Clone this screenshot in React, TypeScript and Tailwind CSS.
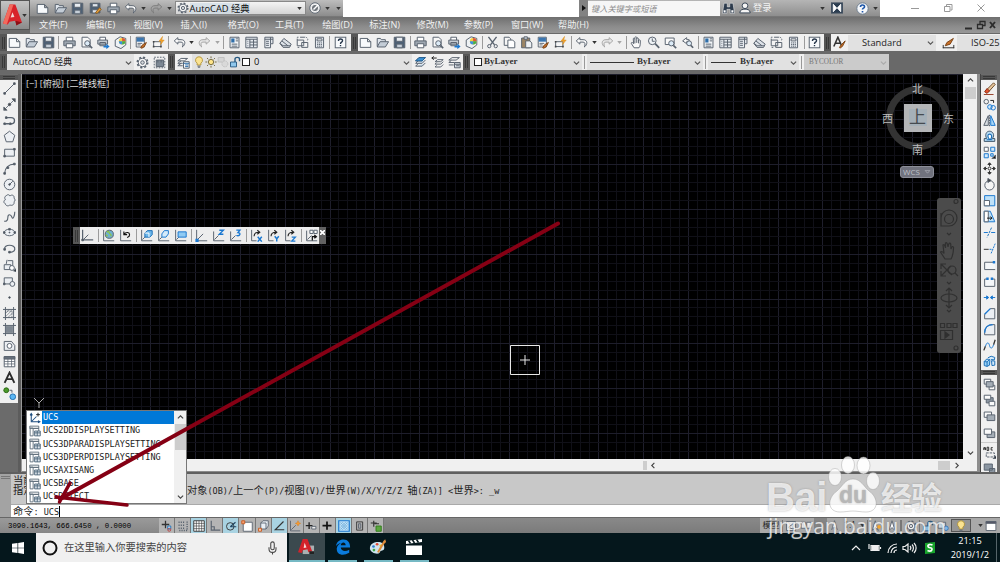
import React from 'react';

const ICONS: Record<string, React.ReactNode> = {
    new: <path d="M1.5 3h9l4 4v7h-13z M10.5 3v4h4" fill="#f7f9fb" />,
    open: <><path d="M1.5 13V3h4l1 1.5h5V7" fill="#dfe5ec" /><path d="M1.5 13.5 5 7h10.5l-4 6.500z" fill="#c3ccd6" /></>,
    save: <><path d="M1.500 1.500h13v13h-13z" fill="#4d6075" /><path d="M4 1.500h8v5H4z" fill="#e8edf2" /><path d="M4.500 10h7v4.500h-7z" fill="#c5ced8" /></>,
    saveas: <><path d="M1.500 1.500h12v12h-12z" fill="#4d6075" /><path d="M4 2h7v4H4zM4 9.500h7v4H4z" fill="#dfe5ec" /><path d="m8 13 5-6 2 2-5 5z" fill="#e9a13b" stroke="#8a5a1c" /></>,
    print: <><path d="M4 6V1.500h8V6" fill="#fff" /><path d="M1 6h14v6H1z" fill="#9ea7b1" /><path d="M4 9.500h8v5H4z" fill="#fff" /></>,
    preview: <><path d="M2.500 1.500h7l3 3v9h-10z" fill="#f7f7f7" /><circle cx="9" cy="9" r="3.200" fill="#dcebf7" /><path d="m11.500 11.500 3.500 3.500" strokeWidth="2" /></>,
    publish: <><path d="M3.500 5V1.500h7V5" fill="#fff" /><path d="M1 5h12v5H1zM3.500 8h7v4h-7z" fill="#c5ccd3" /><path d="M8 12h3.500V9.500L15.500 13l-4 3.200V14H8z" fill="#1b78d0" stroke="none" /></>,
    dwf: <><path d="m1.500 5 6-4 7 2v8l-6 4.500-7-3z" fill="#eef2f5" /><circle cx="10" cy="6.500" r="4" fill="#f4d03c" stroke="none" /><path d="M10 6.500V2.500a4 4 0 0 1 4 4z" fill="#e2543b" stroke="none" /><path d="M10 6.500h4a4 4 0 0 1-4 4z" fill="#45b04b" stroke="none" /><path d="M10 6.500v4a4 4 0 0 1-4-4z" fill="#3d8fe0" stroke="none" /></>,
    match: <><path d="M1.500 1.500h10v12h-10z" fill="#fff" /><path d="M2 2h9v5H2z" fill="#3b76b0" stroke="none" /><path d="M3 9h6M3 11h4" /><path d="m7 14.500 2-3.500 5-3-2.500 5-3 2z" fill="#c8702a" stroke="#7b4416" /></>,
    block: <><path d="M2 7h9v6H2z" fill="#f5f5f5" /><path d="M1 6h2v2H1zM1 12h2v2H1zM10 12h2v2h-2z" fill="#444" stroke="none" /><path d="m13 .5-4.500 6h3l-1 4 4.500-5.500h-3z" fill="#f1a32c" stroke="#d98a17" strokeWidth=".6" /></>,
    undo: <path d="M6 2 1.500 6 6 10V7.500h4c2.500 0 3 3 1.500 6 4.500-3 4-9-1.500-9H6z" fill="#fafafa" />,
    redo: <path d="m10 2 4.500 4L10 10V7.500H6c-2.500 0-3 3-1.500 6-4.500-3-4-9 1.500-9h4z" fill="#e6e6e6" stroke="#a5a5a5" />,
    redotop: <path d="m10 2 4.500 4L10 10V7.500H6c-2.500 0-3 3-1.500 6-4.500-3-4-9 1.500-9h4z" fill="#a4a4a4" stroke="#7c7c7c" />,
    props: <><path d="M2.500 1.500h11v13h-11z" fill="#f3f6f9" /><path d="M4 3h4v5H4z" fill="#2f6ea8" stroke="none" /><path d="M9.500 3.500h3M9.500 6h3M4.500 10h7M4.500 12.500h7" /></>,
    design: <><path d="M1 1.500h14v13H1z" fill="#e7ebf0" /><path d="M1 4h14M6 4v10M6 7.500h9M6 11h9M10.500 4v10M3 6.500h1M3 9h1M3 12h1" /></>,
    palette: <><path d="M3.500 1.500h10v8h-3v5h-7z" fill="#e7ebf0" /><path d="M10.500 1.500v8M3.500 4h10M5 6.500h3.500M5 9h3.500M5 11.500h3.500" /></>,
    sheet: <><path d="m1 9 5-6 9 7-2 4H5z" fill="#dce1e7" /><path d="m1 9 4 3h9M3.500 6 11 12" /></>,
    markup: <><path d="M5 1.500h6M1.500 5h8v7h-8zM7 8h7.500v6H7z" fill="#f4f4f4" /><path d="M3 1.500H1.500V5M12 1.500c3 1 3 3 1.500 5M2 14h3" strokeDasharray="2 1.200" /></>,
    calc: <><path d="M3 1.500h10v13H3z" fill="#e7ebf0" /><path d="M5 3.500h6v2.500H5z" fill="#fff" /><path d="M5 8.500h6M5 10.500h6M5 12.500h6" strokeDasharray="1.500 .8" /></>,
    help: <><rect x="1.500" y="1.500" width="13" height="13" fill="#f7f9fb" /><path d="M5.500 6c0-3 5-3 5-.3 0 2-2.500 1.800-2.500 4M8 11v1.700" stroke="#26364a" strokeWidth="1.700" /></>,
    cut: <><path d="m3 1 7.500 10M13 1 5.500 11" strokeWidth="1.700" /><circle cx="4" cy="12.500" r="2" /><circle cx="12" cy="12.500" r="2" /></>,
    copy: <><path d="M1.500 1.500h6l2 2v8h-8z" fill="#f7f7f7" /><path d="M6 5h6l2.500 2.500v7H6z" fill="#fff" /></>,
    paste: <><path d="M2 2.500h10v12H2z" fill="#9b8464" /><path d="M5 1h4v3H5z" fill="#cfd5da" /><path d="M7 6h5l2.500 2.500v6H7z" fill="#eef1f4" /></>,
    pan: <path d="M5 14.500 1.500 9c0-1.500 1.500-1.500 3 .5L4 3.500c.5-1.500 1.500-1 2 1V2c.5-1.500 2-1.500 2.300 0v2c.5-2.500 2-2.200 2.200 0v2c1-2 2.300-1.500 2.200 0C12.500 10 13 12 11 14.500zM6 5v4M8.300 4v4.500M10.500 5v4" fill="#fafafa" />,
    zoom: <><circle cx="6.500" cy="6" r="4.700" fill="#eff3f6" /><path d="M6.500 3v3.500h3" /><path d="m10 9.500 5 5" strokeWidth="2.200" /></>,
    zoomwin: <><path d="M1.500 2.500h11v8h-11z" fill="#fafafa" /><circle cx="9" cy="9" r="3.200" fill="#dcebf7" /><path d="m11.500 11.500 3.500 3.500" strokeWidth="2" /></>,
    zoomprev: <><path d="M7 2 2 6l5 3.500V7h3V4.500H7z" fill="#fafafa" /><circle cx="10" cy="9" r="3" fill="#dcebf7" /><path d="m12 11.500 3 3" strokeWidth="2" /></>,
    gear: <><circle cx="8" cy="8" r="6.300" strokeWidth="2.200" strokeDasharray="2.500 2.450" /><circle cx="8" cy="8" r="5.200" fill="#f7f7f7" /><circle cx="8" cy="8" r="2.200" fill="#d5d9dd" /></>,
    wsave: <><path d="M1.500 1.500h13v13h-13z" strokeDasharray="2 1.500" /><path d="M4 5h9v8H4z" fill="#7d8894" /><path d="M6 5v3M10 5v3" /></>,
    layer: <><path d="m1 6 4-3h8l-4 3zM1 9l4-3M1 12l4-3M1 9h6M1 12h6" fill="#f7f7f7" /><path d="M8 7h7v8H8z" fill="#f7f9fb" /><path d="M8 9h7M10 11h4M10 13h4" stroke="#2f6ea8" /></>,
    bulb: <><path d="M8 1a4.600 4.600 0 0 0-2.500 8.500V12h5V9.500A4.600 4.600 0 0 0 8 1z" fill="#fbe391" stroke="#b39435" /><path d="M6 13.500h4M6.500 15h3" /></>,
    sun: <><circle cx="8" cy="8" r="3.500" fill="#ffe58a" stroke="#6e6336" /><path d="M8 .5V3M8 13v2.500M.5 8H3M13 8h2.500M2.700 2.700l1.700 1.700M11.600 11.600l1.700 1.700M13.300 2.700l-1.700 1.700M4.400 11.600l-1.700 1.700" stroke="#6e6336" /></>,
    freeze: <g stroke="#bdbdbd"><path d="M1.500 2h8v6h-8z" fill="#d5d5d5" /><circle cx="10.500" cy="10.500" r="4" fill="#d9d9d9" strokeDasharray="2 1.200" /></g>,
    lock: <><path d="M2 8h8v6.500H2z" fill="#8fc7ec" stroke="#24577f" /><path d="M8 8V4c0-3 6-3 6 0v3" stroke="#24577f" strokeWidth="1.800" /></>,
    layeron: <><path d="m2 6 4-4h8l-4 4zM2 9l3-3M2 9h8l4-4M2 12.500l3-3M2 12.500h8l4-4" fill="#cfe3f3" /><path d="m2 6 4-4h8l-4 4z" fill="#3b93d6" stroke="#245f92" /></>,
    layerprev: <><path d="m5 7 3-2.500h7L12 7zM5 10l2-2M5 10h7l3-3M5 13.500l2-2M5 13.500h7l3-3" fill="#f7f7f7" /><path d="M7 2.500H1M3.500.5 1 2.500l2.500 2" stroke="#222" /></>,
    layerstate: <><path d="m1 5 4-3h9l-4 3zM1 8l3-2.500M1 8h7M1 11h6" fill="#f7f7f7" /><path d="M8 8h7v6.500H8zM8 10.200h7M10 12h4" fill="#d5dce3" /></>,
    textstyle: <><path d="M1 13 6 1.500 11 13M3 9h6" stroke="#333" strokeWidth="1.900" /><path d="m8 14 2-3 5-5-3 6-3 3z" fill="#c8702a" stroke="#7b4416" /></>,
    dimstyle: <><path d="M1 14.500h14M1.500 11v4M14.500 11v4" stroke="#333" /><path d="m4 12 2-4 8-5-4 7z" fill="#c8702a" stroke="#7b4416" /></>,
    line: <><path d="M2 14 14 2" /><path d="M1 13h2v2H1zM13 1h2v2h-2z" fill="#444" /></>,
    xline: <><path d="M1 15 15 1M1 15v-4l4 4zM15 1v4l-4-4z" fill="#444" strokeWidth="1" /><circle cx="8" cy="8" r="1.500" fill="#444" /></>,
    pline: <><path d="M4 4.500h6c5.500 0 5.500 7.500 0 7.500H2" strokeWidth="1.700" /><path d="M1 11h2v2H1zM3 3.500h2v2H3zM8 11h2v2H8z" fill="#444" /></>,
    polygon: <path d="m8 1.500 6.500 5-2.500 8H4l-2.500-8z" fill="#eceff3" />,
    rect: <><path d="M2 4h12v8.500H2z" fill="#eceff3" /><path d="M1 11.500h2v2H1zM13 3h2v2h-2z" fill="#444" /></>,
    arc: <><path d="M2 14C2.500 7 7 2.500 14 2.500" strokeWidth="1.500" /><path d="M1 13h2v2H1zM5 6h2v2H5zM13 1.500h2v2h-2z" fill="#444" /></>,
    circle: <><circle cx="8" cy="8" r="6.500" fill="#eceff3" /><path d="m8 8 4-4" /><circle cx="8" cy="8" r="1" fill="#444" /></>,
    revcloud: <path d="M4 2c2-2 4-1 4.500.5C11 0 14.500 2 13.500 5c2 1.500 1.500 4 0 4.500 1 3-2 5.500-5 4-2 2-5.500 1-5.500-1.500C0 11 1 7.500 3 7 1.500 5 2 3 4 2z" fill="#eceff3" />,
    spline: <path d="M1.500 13.500c2 1 4.500 0 4.500-4.500s3.500-4 5 0S14.500 6 14.500 2" strokeWidth="1.400" />,
    ellipse: <><ellipse cx="8" cy="8" rx="6.500" ry="4" fill="#eceff3" /><path d="M.5 7h2v2h-2zM7 3h2v2H7zM13.500 7h2v2h-2zM7.500 7.500h1v1h-1z" fill="#444" /></>,
    earc: <><path d="M2 8.500C1.500 5.500 4.500 4 8 4s7 2 6.500 5-4 4-7 3.500" strokeWidth="1.500" /><path d="M1 8h2v2H1zM7 11.500h2v2H7z" fill="#444" /></>,
    insert: <><path d="M1.500 7h8v6h-8zM6 2h6v6" fill="#eceff3" /><circle cx="11" cy="11" r="3" fill="#fff" /><path d="M13 14.500 16 12v3.500z" fill="#111" /><path d="m5 1-1 5" /></>,
    mkblock: <><path d="M1.500 3.500h10V11h-10z" fill="#eceff3" /><circle cx="11.500" cy="11" r="3" fill="#eceff3" /><path d="M.5 10h2v2h-2z" fill="#444" /></>,
    point: <circle cx="8" cy="8" r="1" fill="#333" />,
    hatch: <><path d="M3 0v16M0 3h16M13 0v16M0 13h16" /><path d="m3 8 5-5M3 12l9-9M6 13l7-7" strokeWidth=".7" /><path d="M3 5h8v8H3z" strokeDasharray="1 1" /></>,
    gradient: <><path d="M3 0v16M0 3h16M13 0v16M0 13h16" /><path d="M3 4h9v8H3z" fill="#7e8791" strokeWidth=".5" /></>,
    region: <><path d="M1.500 14V3h9l4 5v6z" fill="#eceff3" /><circle cx="8" cy="8.500" r="3" fill="#fff" /></>,
    table: <><path d="M1.500 2h13v12.500h-13z" fill="#fff" /><path d="M1.500 2h13v3h-13z" fill="#68727e" /><path d="M1.500 8h13M1.500 11h13M6 5v9.500M10.500 5v9.500" strokeWidth=".9" /></>,
    mtext: <path d="M2 14.500 8 2l6 12.500M4.500 10h7" stroke="#2d2d2d" strokeWidth="2.300" />,
    addsel: <><circle cx="4" cy="4" r="3" fill="#4c9a2a" stroke="#2c6a14" /><circle cx="12" cy="12" r="3.500" fill="#5cb8f5" stroke="#2573b3" /><path d="M8 4h3v3" /></>,
    erase: <><path d="m4 10 9-9 2 2-8 9z" fill="#e8c79e" stroke="#6b4c2a" /><path d="m2 12 3-4 3 3-3 3z" fill="#e2532f" stroke="#8d2f17" /><path d="M1 15.500h12" stroke="#8d2f17" /></>,
    mcopy: <><circle cx="4" cy="4.500" r="2.800" /><g stroke="#1b78d0"><circle cx="8.500" cy="11" r="2.800" fill="#d4eafa" /><circle cx="12.500" cy="12" r="2.800" /></g><path d="M9 3h4v3" stroke="#222" /></>,
    mirror: <><path d="M6.500 2v12H1z" fill="#d9dee3" /><path d="M9.500 2v12H15z" fill="#a9d7f7" stroke="#1b78d0" /><path d="M8 1v14" strokeDasharray="2 1" /></>,
    offset: <g stroke="#1b6fb8"><path d="M1.500 14v-3.500h3C2 6 4 1.500 8 1.500s7 4.500 3.500 9h3V14z" fill="#b8dcf5" stroke="#3d5368" /><path d="M4.500 12h4C5 9 5.500 5 8 5s4 3 1 7h2.500" fill="#fff" strokeWidth="1.400" /></g>,
    array: <><path d="M1.500 1.500h5v5h-5z" fill="#fff" /><path d="M9.500 1.500h5v5h-5zM1.500 9.500h5v5h-5zM9.500 9.500h3v3h-3z" stroke="#1b78d0" fill="#d4eafa" /><path d="M11 15.500 15.500 11v4.500z" fill="#111" /></>,
    move: <><path d="M8 1v14M1 8h14" strokeDasharray="4 1" stroke="#333" /><path d="M6 3l2-2 2 2zM6 13l2 2 2-2zM3 6 1 8l2 2zM13 6l2 2-2 2z" fill="#333" stroke="#333" /><circle cx="8" cy="8" r="1.800" fill="#fff" stroke="#333" /></>,
    rotate: <><circle cx="8" cy="9" r="5.800" fill="#f5f5f5" /><path d="M6 .5 10 3 6 5.500z" fill="#444" /></>,
    scale: <><path d="M2 2h12.500v12.500H2z" fill="#bfe1f8" stroke="#1b78d0" /><path d="M1.500 8h6.500v6.500H1.500z" fill="#fff" /></>,
    stretch: <><path d="M1.500 1.500H9l5.500 13h-13z" fill="#bfe1f8" stroke="#1b78d0" /><path d="M1.500 1.500h5v13h-5z" fill="#fff" /><path d="M5 10h6M9 8l2 2-2 2" stroke="#111" /></>,
    trim: <><path d="M1 8h5M10 8h5" stroke="#1b78d0" /><path d="M10.500 2 5 14" stroke="#1b6fb8" strokeDasharray="3 1.200" /></>,
    extend: <><path d="M1 9h6" stroke="#333" /><path d="M8 9h4M10 14l5-12" stroke="#1b78d0" strokeDasharray="2.500 1" /></>,
    breakpt: <><path d="M14 4H2v9h13" fill="#f5f7f9" /><path d="M12 2.500h3v3h-3z" fill="#1b78d0" stroke="none" /></>,
    break: <><path d="M5 5H2v9h12.500V5H11" fill="#f5f7f9" /><path d="M4 3h3v3H4zM9.500 3h3v3h-3z" fill="#1b78d0" stroke="none" /></>,
    join: <path d="M1 8h5M10 8h5M4.500 6 7 8l-2.500 2zM11.500 6 9 8l2.500 2z" stroke="#1b78d0" fill="#1b78d0" />,
    chamfer: <><path d="M2 14.500V9l7-7h5.500v12.500z" fill="#eceff3" /><path d="m2 9 7-7" stroke="#1b78d0" strokeWidth="1.700" /></>,
    fillet: <><path d="M2 14.500V12C2 6 6 2 12 2h2.500v12.500z" fill="#eceff3" /><path d="M2 12C2 6 6 2 12 2" stroke="#1b78d0" strokeWidth="1.700" /></>,
    blend: <><path d="M1 14 3 9M13 7l2-6" stroke="#333" strokeWidth="1.600" /><path d="M3 9c2-6 4-5 5-1s3 5 5-1" stroke="#1b78d0" /></>,
    explode: <><path d="m1.500 8 3-3 4 .5-.5 7-3 1.500-3.500-1z" fill="#9bd1f5" stroke="#1b6fb8" /><path d="m6 3.500 4-2 4.500 1.500-.5 3-4-.5M10.500 7l4 .5v5l-3.500.5zM1.500 8l3.500.5 3-3M5 8.500V14" fill="#d4eafa" stroke="#1b6fb8" /></>,
    front: <><path d="M1.500 1.500h8v6h-8zM7.500 9h7v5.500h-7z" fill="#fafafa" /><path d="M4 4.500h8.500V11H4z" fill="#a4adb6" /></>,
    back: <><path d="M4 4.500h8.500V11H4z" fill="#8b96a2" /><path d="M1.500 1.500h8v5h-8zM7.500 9h7v5.500h-7z" fill="#fafafa" /></>,
    above: <><path d="M1.500 2.500h9V9h-9z" fill="#fafafa" /><path d="M5 6h9.500v7H5z" fill="#a4adb6" /></>,
    under: <><path d="M5 6h9.500v7H5z" fill="#a4adb6" /><path d="M1.500 2.500h9V9h-9z" fill="#fafafa" /></>,
    annofront: <><path d="M1 5V2h2v3M1 3.500h2M5 1.500v4h2v-4zM12 2h-2v3h2" stroke="#222" strokeWidth="1.100" /><path d="M4 8.500h10v5H4z" strokeDasharray="3 1.200" /><path d="M12.500 15.500 16 12v3.500z" fill="#111" /></>,
    hatchback: <path d="M1.500 2.500h10V10h-10zM8 8h6.500v7H8z" fill="#8b96a2" />,
    ucs: <><path d="M2 1v12.500h13" strokeWidth="1.500" /><path d="m3 13 6-6" /><path d="M1 12.500h2v2H1z" fill="#444" /></>,
    ucsworld: <><path d="M2 1v13.500h13" /><circle cx="9" cy="6.500" r="5" fill="#6fb1d0" /><path d="M6 4c2-2 3 0 3 1s3 1 2 4M5 7l2 2" stroke="#8bc34a" strokeWidth="1.800" /></>,
    ucsprev: <><path d="M2 1v13.500h13" /><path d="M6 6.500C9 3 13 4 13 7s-2 3-3 3.500M6 3v4h4" stroke="#111" strokeWidth="1.400" /></>,
    ucsface: <><path d="M2 1v13.500h13M3 13l3-3" /><path d="m6 5 3-3h6v5l-3 3H6z" fill="#6db7ea" stroke="#1b6fb8" /><path d="M6 5h5v5" stroke="#fff" /></>,
    ucsobj: <><path d="M2 1v13.500h13M3 13l3-3" /><path d="m6 6 3-4h5v4l-3 4H6z" fill="#d4eafa" stroke="#1b78d0" /></>,
    ucsview: <><path d="M2 1v13.500h13M3 13l3-3" /><path d="M5 3.500h10V10H5z" fill="#8fcaf3" stroke="#1b78d0" /></>,
    ucsorigin: <><path d="M2 1v13.500h13M3 13l7-7" /><path d="M.5 12h4v4h-4z" fill="#1b78d0" stroke="none" /></>,
    ucsz: <><path d="M2 3v11.500h13M3 13l5-5" /><path d="M9 1.500h5l-5 5h5" stroke="#1b78d0" strokeWidth="1.700" /></>,
    ucs3: <><path d="M2 3v11.500h13M3 13l5-5" /><path d="M9 1.500h4.500L11 4.500c4 0 3 5-2 3.500" stroke="#1b78d0" strokeWidth="1.600" /></>,
    rotx: <><path d="M2 1v13.500h6" /><path d="M5 9c0-4 2-5 6-5M9 1.500 12 4 9 6.500" stroke="#222" strokeWidth="1.400" /><path d="m9.500 9.500 5 6m0-6-5 6" stroke="#1b78d0" strokeWidth="1.800" /></>,
    roty: <><path d="M2 1v13.500h6" /><path d="M5 9c0-4 2-5 6-5M9 1.500 12 4 9 6.500" stroke="#222" strokeWidth="1.400" /><path d="m9.500 9 2.500 3 2.500-3M12 12v3.500" stroke="#1b78d0" strokeWidth="1.800" /></>,
    rotz: <><path d="M2 1v13.500h6" /><path d="M5 9c0-4 2-5 6-5M9 1.500 12 4 9 6.500" stroke="#222" strokeWidth="1.400" /><path d="M9.500 10h4.500l-4.500 5H14" stroke="#1b78d0" strokeWidth="1.600" /></>,
    ucsapply: <><path d="M2 2v12.500h13M3 13l5-5" /><path d="M6 1.500h4v4H6zM11 1.500h4v4h-4z" fill="#fff" /><path d="M9 14V9.500h4M11.500 7.500l2.500 2-2.500 2" stroke="#111" strokeWidth="1.500" /></>,
    infer: <><path d="M6 1v10M1 6h10" strokeWidth="1.700" stroke="#333" /><path d="M9 8h4v4H9z" stroke="#1b6fb8" fill="#c1def2" /><circle cx="11" cy="13" r="2" stroke="#b44" /></>,
    snap: <path d="M2 3h9M2 7h9M2 11h9M13.500 2v12H2" strokeDasharray="1.500 1.500" strokeWidth="1.800" />,
    grid: <><path d="M1 1h14v14H1z" fill="#fff" stroke="#333" /><path d="M1 4.500h14M1 8h14M1 11.500h14M4.500 1v14M8 1v14M11.500 1v14" stroke="#333" strokeWidth=".8" /></>,
    ortho: <path d="M3 1v12.500h12M3 9h4v4" strokeWidth="1.500" />,
    polar: <><circle cx="7" cy="8.500" r="5" stroke="#333" /><path d="m7 9 7-6M7 9h8" stroke="#1f4460" strokeWidth="1.500" /></>,
    osnap: <><path d="M3 3h12v12H3z" fill="#fff" /><path d="M1 1h4v4H1z" fill="#f7a071" stroke="#c65b23" /></>,
    osnap3d: <><path d="m5 4 3-3h7v7l-3 4H5z" fill="#e8eef4" /><path d="M5 4h7v8" /><path d="M2 11h4v4H2z" stroke="#c65b23" fill="#f7c3a1" /></>,
    otrack: <path d="M14 2 3 13h12" stroke="#333" strokeWidth="1.500" />,
    ducs: <><path d="M2 1v13.500h13M3 13l6-6" /><path d="m12 1 1 2.500 2.500 1-2.500 1-1 2.500-1-2.500-2.500-1 2.500-1z" fill="#ff9c2f" stroke="#d47a12" strokeWidth=".6" /></>,
    dyn: <><path d="M5.500 3v9M1 7.500h9" stroke="#222" strokeWidth="1.800" /><path d="M9 8.500h5.500V12H9z" fill="#eee" /></>,
    lwt: <path d="M8 2v11M2 7.500h12" stroke="#111" strokeWidth="2.300" />,
    tpy: <><path d="M1 1h14v14H1z" fill="#c2e2f8" stroke="#1b78d0" strokeWidth="1.600" /><path d="m3 6 3-3M3 10l7-7M3 13 13 3M6 13l7-7M10 13l3-3M3 10l3 3M3 6l7 7M3 3l10 10M6 3l7 7M10 3l3 3" stroke="#4b95cc" strokeWidth=".6" /></>,
    qp: <><path d="M3.500 2.500h8v11h-8z" stroke="#333" /><path d="M6 5h3v6H6z" fill="#aaa" /></>,
    sc: <><path d="M5 1v8M1 4h8M6 5h6" stroke="#333" strokeWidth="1.500" /><path d="M8 8h7v7H8z" fill="#5aa63f" stroke="#2f7a18" /></>,
    layout: <path d="M2 2h12v12H2zM4 10l7-5v7z" fill="#eee" />,
    qview: <path d="M1.500 3h6v8h-6zM9 3h6v8H9z" fill="#eee" />,
    anno: <path d="m8 1 4 13-4-4-4 4z" fill="#fff" />,
    annoVis: <><path d="m7 1 4 13-4-4-4 4z" fill="#fff" /><circle cx="12" cy="9" r="2.500" fill="#f6a52b" stroke="none" /></>,
    monitor: <><path d="M1.500 3h10v8h-10z" fill="#c7d9e6" /><circle cx="12" cy="11" r="3" fill="#82b9ea" stroke="#3375b5" /></>,
    clean: <><path d="M1.500 2h13v12h-13z" fill="#fff" /><path d="M1.500 2h13v2.500h-13z" fill="#556" /></>,
    compass: <><circle cx="8" cy="8" r="7" fill="#eee" /><circle cx="8" cy="8" r="4.800" fill="#6d737a" stroke="#fff" /><path d="m6 10 6-6" stroke="#fff" strokeWidth="2" /></>,
    binoc: <><path d="M2.500 1.500h4V6h3V1.500h4L15.500 14H10V9H6v5H.5z" fill="#2e3c4d" stroke="#e9e9e9" strokeWidth=".7" /><path d="M2 10h2.500v3H2zM11.500 10H14v3h-2.500z" fill="#fff" stroke="none" /></>,
    person: <><circle cx="8" cy="5" r="3.800" fill="#f5f5f5" stroke="#2e3c4d" /><path d="M1 14.500c0-4 4-5 7-5s7 1 7 5z" fill="#f5f5f5" stroke="#2e3c4d" /></>,
    exchange: <><path d="M0 1h16v14H0z" fill="#2b3d50" /><path d="m3 3 4.500 5L3 13zM13 3 8.500 8l4.500 5z" fill="#fff" stroke="#fff" /></>,
    helpblue: <><circle cx="8" cy="8" r="7" fill="#f6f8fb" stroke="#6d7d90" /><path d="M5.500 6c0-3 5-3 5-.3 0 2-2.500 1.800-2.500 3.500M8 11v2" stroke="#1c55a8" strokeWidth="2" /></>,
    sysvar: <><path d="M1 1.500h12v3H1zM1.500 4v10.500h4V4zM6 4.500h7V8" fill="#fff" stroke="#5b6b78" /><path d="M7.500 8h7.500v6.500H7.500z" fill="#dfe6ec" stroke="#4b6478" /><path d="M7.500 10.500H15M11 8v6.500" stroke="#4b6478" /></>,
    ucscmd: <><path d="M3 3v10h11M4 12l6-6M1.500 4.500 3 2l1.500 2.500M12 11.500l2.500 1.500-2.500 1.500" stroke="#1e4e80" strokeWidth="1.400" /><path d="M12 1v5M9.500 3.500h5" stroke="#222" strokeWidth="1.300" /></>,
};

const Icon = ({ name, size = 14 }: { name: string; size?: number }) => (
    <svg
        viewBox="0 0 16 16"
        width={size}
        height={size}
        fill="none"
        stroke="#59636f"
        strokeWidth={1.2}
        className="block shrink-0"
    >
        {ICONS[name]}
    </svg>
);

const Caret = ({ dim = false }: { dim?: boolean }) => (
    <svg viewBox="0 0 6 4" width="5" height="3" className="shrink-0">
        <path d="M0 0h6L3 4z" fill={dim ? '#a5a5a5' : '#333'} />
    </svg>
);

type Dir = 'down' | 'up' | 'left' | 'right';

const CHEVRONS: Record<Dir, string> = {
    down: 'M1 3l3 3 3-3',
    up: 'M1 5l3-3 3 3',
    left: 'M5 1L2 4l3 3',
    right: 'M3 1l3 3-3 3',
};

const Chevron = ({ dir = 'down', color = '#444' }: { dir?: Dir; color?: string }) => (
    <svg viewBox="0 0 8 8" width="7" height="7" className="shrink-0">
        <path d={CHEVRONS[dir]} fill="none" stroke={color} strokeWidth="1.3" />
    </svg>
);

const Grip = () => (
    <div className="flex h-full w-[7px] shrink-0 items-center justify-center gap-px bg-[#565656]">
        <div className="h-3 w-px bg-[#383838]" />
        <div className="h-3 w-px bg-[#383838]" />
    </div>
);

// "|" is a separator, "v" / "w" are drop-down carets (normal / disabled)
const Tools = ({ items }: { items: string }) => (
    <>
        {items.split(' ').map((item, i) => {
            if (item === '|') {
                return <div key={i} className="mx-[1.5px] h-[13px] w-px shrink-0 bg-[#9b9b9b]" />;
            }
            if (item === 'v' || item === 'w') {
                return (
                    <div key={i} className="flex w-[8.5px] shrink-0 justify-center">
                        <Caret dim={item === 'w'} />
                    </div>
                );
            }
            return (
                <div key={i} className="flex w-[17px] shrink-0 justify-center">
                    <Icon name={item} size={13} />
                </div>
            );
        })}
    </>
);

const STANDARD_A = 'new open save | print preview publish dwf | match block | undo v redo w | props design palette sheet markup calc | help';
const STANDARD_B = 'new open save | print preview publish dwf | cut copy paste match block | undo v redo w | pan zoom zoomwin zoomprev | props design palette sheet markup calc | help';

const MENUS = ['文件(F)', '编辑(E)', '视图(V)', '插入(I)', '格式(O)', '工具(T)', '绘图(D)', '标注(N)', '修改(M)', '参数(P)', '窗口(W)', '帮助(H)'];

const QuickBar = () => (
    <div className="flex h-[17px] bg-white">
        <div className="flex w-[313px] items-center border-b border-[#777] bg-[linear-gradient(#bdbdbd,#8c8c8c)] pl-[4px]">
            {['new', 'open', 'save', 'saveas', 'print', 'undo'].map((name) => (
                <div key={name} className="flex w-[17.600px] justify-center">
                    <Icon name={name} size={13} />
                </div>
            ))}
            <div className="flex w-[8px] justify-center"><Caret /></div>
            <div className="flex w-[18px] justify-center"><Icon name="redotop" size={13} /></div>
            <div className="flex w-[7px] justify-center"><Caret /></div>
            <div className="ml-[2px] flex h-[14px] w-[131px] items-center border border-[#888] bg-[linear-gradient(#f4f4f4,#d4d4d4)] pr-[3px] pl-px text-[9.300px] text-[#111]">
                <Icon name="gear" size={12} />
                <span className="ml-px bg-[#cfdbe6]/70 leading-[11px]">AutoCAD 经典</span>
                <span className="flex-1" />
                <Caret />
            </div>
            <div className="ml-[3px]"><Icon name="compass" size={12} /></div>
            <div className="ml-[4px]"><Caret /></div>
            <div className="ml-[6px]"><Caret /></div>
        </div>
        <div className="flex-1" />
        <div className="flex w-[301px] items-center border-b border-[#777] bg-[linear-gradient(#b5b5b5,#8e8e8e)]">
            <div className="flex h-full w-[9px] items-center justify-center bg-[#828282]">
                <svg viewBox="0 0 4 6" width="4" height="6"><path d="M0 0l4 3-4 3z" fill="#111" /></svg>
            </div>
            <div className="h-[15px] w-[132px] bg-[#f6f6f6] pl-[3px] text-[8.200px] leading-[15px] text-[#8a8a8a] italic">键入关键字或短语</div>
            <div className="ml-[2px]"><Icon name="binoc" size={13} /></div>
            <div className="ml-[4px]"><Icon name="person" size={12} /></div>
            <span className="ml-[2px] w-[67px] text-[9.300px] text-[#f3f3f3]">登录</span>
            <Caret />
            <div className="ml-[6px]"><Icon name="exchange" size={12} /></div>
            <div className="ml-[13px]"><Icon name="helpblue" size={13} /></div>
            <div className="ml-[4px]"><Caret /></div>
        </div>
        <div className="flex w-[120px] items-center">
            <svg viewBox="0 0 120 17" width="120" height="17" fill="none" stroke="#999" strokeWidth="1">
                <path d="M31 8.500h8M64.500 6.500h5.500v5h-5.500zM66.500 6V4.500h5.500V10h-1.500M97.500 4.500l7 7M104.500 4.500l-7 7" />
            </svg>
        </div>
    </div>
);

const MenuBar = () => (
    <div className="flex h-[16px] items-center bg-[linear-gradient(#6f6f6f,#8c8c8c_60%,#979797)] text-[9.200px] text-[#f0f0f0]">
        <div className="flex pl-[2px]">
            {MENUS.map((m) => (
                <div key={m} className="w-[47.200px] pl-[7px] whitespace-nowrap">{m}</div>
            ))}
        </div>
        <div className="flex-1" />
        <svg viewBox="0 0 40 12" width="40" height="12" fill="none" stroke="#2b2b2b" className="mr-px">
            <path d="M6 9.500h7" strokeWidth="2" />
            <path d="M18.500 5.500h5v4h-5zM21 5V2.500h5v4h-2" strokeWidth="1.300" />
            <path d="m31 3 5 6M36 3l-5 6" strokeWidth="1.900" />
        </svg>
    </div>
);

const AppButton = () => (
    <div className="flex w-[30px] flex-col bg-[#696969]">
        <div className="flex h-[30px] items-center border border-[#555] bg-[linear-gradient(#c4c4c4,#8b8b8b)] pl-[2px]">
            <svg viewBox="0 0 20 24" width="19" height="24">
                <path d="M7 1h6l7 19-6 2-1-4-6 1-2 3-5-1z" fill="#d8232a" />
                <path d="M7 1h4L4 22l-4-1z" fill="#f26a5d" />
                <path d="m10 9 2 5-4 .5z" fill="#f4d9d6" />
                <path d="m13 18 7 2-6 3z" fill="#8d0f15" />
            </svg>
            <Caret />
        </div>
    </div>
);

const Combo = ({ className, children, disabled = false }: { className: string; children: React.ReactNode; disabled?: boolean }) => (
    <div className={`flex h-[16px] shrink-0 items-center pr-[2px] ${disabled ? 'bg-[#cbcbcb]' : 'bg-[#e1e1e1]'} ${className}`}>
        <div className="flex flex-1 items-center overflow-hidden whitespace-nowrap">{children}</div>
        <Chevron color={disabled ? '#aaa' : '#555'} />
    </div>
);

const ToolbarRows = () => (
    <div className="flex h-[41px] flex-col bg-[#696969]">
        <div className="mt-px flex h-[17px] items-center overflow-hidden bg-[#f0f0f0]">
            <Grip />
            <div className="-ml-[1.500px] flex w-[345.500px] shrink-0 items-center"><Tools items={STANDARD_A} /></div>
            <Grip />
            <div className="-ml-[1px] flex w-[467px] shrink-0 items-center"><Tools items={STANDARD_B} /></div>
            <Grip />
            <div className="flex w-[17px] shrink-0 justify-center"><Icon name="textstyle" size={13} /></div>
            <Combo className="w-[88px] pl-[14px] text-[9.300px] text-[#222]">Standard</Combo>
            <div className="mx-[2px] h-[13px] w-px bg-[#bbb]" />
            <div className="flex w-[17px] shrink-0 justify-center"><Icon name="dimstyle" size={13} /></div>
            <div className="flex h-[16px] w-[46px] shrink-0 items-center bg-[#e1e1e1] pl-[14px] text-[9.300px] whitespace-nowrap text-[#222]">ISO-25</div>
        </div>
        <div className="mt-[3px] flex h-[16px] w-[889px] items-center bg-[#f0f0f0]">
            <Grip />
            <Combo className="w-[127px] pl-[6px] text-[9.200px] text-[#222]">AutoCAD 经典</Combo>
            <Tools items="gear wsave" />
            <Grip />
            <Tools items="layer" />
            <Combo className="w-[220px] pl-px">
                <div className="flex items-center">
                    <Icon name="bulb" size={12} />
                    <Icon name="sun" size={12} />
                    <Icon name="freeze" size={12} />
                    <Icon name="lock" size={12} />
                    <div className="ml-px h-[8px] w-[8px] border border-[#222] bg-white" />
                    <span className="ml-[4px] text-[9.300px] leading-[14px] text-[#111]">0</span>
                </div>
            </Combo>
            <Tools items="layeron layerprev layerstate" />
            <Grip />
            <Combo className="w-[112px] pl-[4px] font-['Liberation_Serif'] text-[9px] font-bold text-[#333]">
                <div className="mr-[2px] h-[8px] w-[8px] border border-[#222] bg-white" />
                ByLayer
            </Combo>
            <div className="mx-[2px] h-[13px] w-px bg-[#999]" />
            <Combo className="w-[116px] pl-[3px] font-['Liberation_Serif'] text-[9px] font-bold text-[#333]">
                <div className="mr-[3px] h-px w-[44px] bg-[#333]" />
                ByLayer
            </Combo>
            <div className="mx-[2px] h-[13px] w-px bg-[#999]" />
            <Combo className="w-[91px] pl-[3px] font-['Liberation_Serif'] text-[9px] font-bold text-[#333]">
                <div className="mr-[4px] h-px w-[25px] bg-[#333]" />
                ByLayer
            </Combo>
            <div className="mx-[2px] h-[13px] w-px bg-[#999]" />
            <Combo disabled className="flex-1 pl-[5px] font-['Liberation_Serif'] text-[7.200px] text-[#777]">BYCOLOR</Combo>
        </div>
    </div>
);

const DRAW = ['line', 'xline', 'pline', 'polygon', 'rect', 'arc', 'circle', 'revcloud', 'spline', 'ellipse', 'earc', 'insert', 'mkblock', 'point', 'hatch', 'gradient', 'region', 'table', 'mtext', 'addsel'];
const MODIFY = ['erase', 'mcopy', 'mirror', 'offset', 'array', 'move', 'rotate', 'scale', 'stretch', 'trim', 'extend', 'breakpt', 'break', 'join', 'chamfer', 'fillet', 'blend', 'explode'];
const ORDER = ['front', 'back', 'above', 'under'];

const VTools = ({ items }: { items: string[] }) => (
    <>
        {items.map((name) => (
            <div key={name} className="flex h-[16.100px] shrink-0 items-center justify-center">
                <Icon name={name} size={13} />
            </div>
        ))}
    </>
);

const HGrip = () => (
    <div className="flex h-[5px] shrink-0 flex-col items-center justify-center gap-px bg-[#565656]">
        <div className="h-px w-3 bg-[#383838]" />
        <div className="h-px w-3 bg-[#383838]" />
    </div>
);

// grid spacing of the drawing area, a heavy line every fifth
const STEP = 8.96;
const gridLines = (start: number, limit: number) => {
    const out: { at: number; major: boolean }[] = [];
    for (let i = -5; start + i * STEP < limit; i++) {
        const at = start + i * STEP;
        if (at >= 0) out.push({ at: Math.round(at) + 0.5, major: i % 5 === 0 });
    }
    return out;
};

const Grid = () => (
    <svg width="941" height="385" className="block">
        {gridLines(38.7, 941).map((l) => (
            <path key={`x${l.at}`} d={`M${l.at} 0V385`} stroke={l.major ? '#1e1e2b' : '#101017'} />
        ))}
        {gridLines(45.3, 385).map((l) => (
            <path key={`y${l.at}`} d={`M0 ${l.at}H941`} stroke={l.major ? '#1e1e2b' : '#101017'} />
        ))}
        {/* pick box cursor */}
        <path d="M488.500 271.500h29v29h-29zM498 286h10M503 281v10" fill="none" stroke="#e8e8e8" />
        <path d="m12 324 5 5 5-5M17 329v5" fill="none" stroke="#aaa" />
    </svg>
);

const ViewCube = () => (
    <div className="absolute top-[5px] left-[859px] h-[82px] w-[74px] font-['Noto_Sans_CJK_SC'] text-[11px] leading-[12px] text-[#bdbdbd]">
        <svg viewBox="0 0 74 82" width="74" height="82" className="absolute inset-0">
            <circle cx="37" cy="39" r="28.500" fill="none" stroke="#333" strokeWidth="7" />
            <path d="M23 25h28v28H23z" fill="#b3b5b7" />
            <path d="M28 30h18v17H28z" fill="#a5b0b8" />
        </svg>
        <span className="absolute top-[3px] left-[31px]">北</span>
        <span className="absolute top-[33px] left-[1px]">西</span>
        <span className="absolute top-[33px] left-[62px]">东</span>
        <span className="absolute top-[64px] left-[31px]">南</span>
        <span className="absolute top-[28px] left-[28px] text-[17px] leading-[18px] text-[#454b50]">上</span>
    </div>
);

const NavBar = () => (
    <div className="absolute top-[124px] left-[915px] rounded-[3px] bg-[#4b4b4b]">
        <svg viewBox="0 0 24 155" width="24" height="155" fill="none" stroke="#303030" strokeWidth="1.2" className="block">
            <circle cx="19" cy="3.500" r="2" />
            <path d="M4 15v13h8a8 8 0 1 0-8-8" />
            <circle cx="12" cy="21" r="4.500" />
            <path d="m10 35 2 2 2-2M10 84l2 2 2-2M10 112l2 2 2-2" />
            <path d="M8 61 3.500 54c1-1 2.500 0 3.500 1.500L6 47c1-1 2 0 2.500 3V45c1-1 2 0 2.500 4 .5-4 2-5 2.700-3l.3 5c1-3 2-3 2.500-1.500 0 5-.5 8-2.500 11.500z" />
            <path d="m4 66 11 11M4 71v-5h5M4 78l10-10M4 73v5h5" />
            <circle cx="15" cy="72" r="4" />
            <path d="m18 75 3 3M12 90v20M9 93l3-3 3 3M9 107l3 3 3-3" />
            <ellipse cx="12" cy="100" rx="8" ry="4" />
            <path d="M3.500 125.500h4v4h-4zM10 125.500h4v4h-4zM16 125.500h4v4h-4zM3.500 132.500h12v9h-12z" />
            <path d="m8 134 4 3-4 3z" fill="#303030" />
            <circle cx="19" cy="150" r="2" />
        </svg>
    </div>
);

const UcsBar = () => (
    <div className="absolute top-[153px] left-[51px] flex h-[17px] w-[253px] items-center bg-[#ededed]">
        <Grip />
        <div className="-ml-px flex w-[240px] items-center">
            <Tools items="ucs | ucsworld ucsprev | ucsface ucsobj ucsview | ucsorigin ucsz ucs3 | rotx roty rotz | ucsapply" />
        </div>
        <div className="flex h-full flex-1 justify-center bg-[#616161] pt-[3px]">
            <svg viewBox="0 0 6 6" width="5" height="5"><path d="m0 0 6 6M6 0 0 6" stroke="#fff" strokeWidth="2" /></svg>
        </div>
    </div>
);

const Canvas = () => (
    <div className="relative h-[385px] w-[941px] overflow-hidden bg-black">
        <Grid />
        <div className="absolute top-[4px] left-[4px] text-[9.200px] leading-[12px] text-[#dcdcdc]">[−] [俯视] [二维线框]</div>
        <UcsBar />
        <ViewCube />
        <div className="absolute top-[92px] left-[878px] flex h-[12px] w-[34px] items-center justify-between rounded-[3px] border border-[#8d8f99] bg-[#70727d] px-[2px] text-[8px] leading-none text-[#bfc0c8]">
            WCS
            <svg viewBox="0 0 8 5" width="7" height="4"><path d="M1 .5h6L4 4z" fill="none" stroke="#a5a7b0" /></svg>
        </div>
        <NavBar />
    </div>
);

const Workspace = () => (
    <div className="flex h-[398px] overflow-hidden bg-[#6b6b6b]">
        <div className="flex w-[18px] flex-col">
            <div className="mt-px flex h-[328px] flex-col bg-[#f0f0f0]">
                <HGrip />
                <VTools items={DRAW} />
            </div>
        </div>
        <div className="w-[4px] border-r border-[#999] bg-[#5c5c5c]" />
        <div className="flex w-[955px] flex-col bg-[#f0f0f0]">
            <div className="flex">
                <Canvas />
                <div className="flex w-[14px] flex-col items-center py-[3px]">
                    <Chevron dir="up" />
                    <div className="mt-[3px] h-[12px] w-[11px] bg-[#cdcdcd]" />
                    <div className="flex-1" />
                    <Chevron dir="down" />
                </div>
            </div>
            <div className="flex h-[12px] items-center">
                <div className="ml-[621px] h-[9px] w-[4px] bg-[#cdcdcd]" />
                <div className="ml-[3px]"><Chevron dir="left" /></div>
                <div className="ml-[281px] h-[9px] w-[12px] bg-[#cdcdcd]" />
                <div className="ml-[3px]"><Chevron dir="right" /></div>
            </div>
            <div className="h-px bg-[#8a8a8a]" />
        </div>
        <div className="w-[4px] border-r border-[#444] bg-[#8d8d8d]" />
        <div className="mt-px flex w-[16px] flex-col bg-[#f0f0f0]">
            <HGrip />
            <VTools items={MODIFY} />
            <div className="mb-[2px]"><HGrip /></div>
            <VTools items={ORDER} />
            <div className="my-px h-px shrink-0 bg-[#ccc]" />
            <VTools items={['annofront', 'hatchback']} />
        </div>
    </div>
);

// full-width characters take two cells of the console font
const Mono = ({ text }: { text: string }) => (
    <span className="font-['DejaVu_Sans_Mono'] text-[8.500px] whitespace-pre">
        {text.split(/([\u4e00-\u9fff]+)/).map((part, i) =>
            i % 2 ? <span key={i} className="font-['Noto_Sans_CJK_SC'] text-[10.240px]">{part}</span> : part
        )}
    </span>
);

const COMMANDS = ['UCS', 'UCS2DDISPLAYSETTING', 'UCS3DPARADISPLAYSETTING', 'UCS3DPERPDISPLAYSETTING', 'UCSAXISANG', 'UCSBASE', 'UCSDETECT'];

const Suggestions = () => (
    <div className="absolute top-[410px] left-[26px] flex h-[94px] w-[161px] overflow-hidden border border-[#777] bg-white">
        <div className="flex-1">
            {COMMANDS.map((c, i) => (
                <div key={c} className="flex h-[13.200px] items-center">
                    <div className="flex w-[15px] justify-center"><Icon name={i ? 'sysvar' : 'ucscmd'} size={12} /></div>
                    <div className={`flex h-full flex-1 items-center pl-px ${i ? 'text-[#222]' : 'bg-[#0078d7] text-white'}`}>
                        <Mono text={c} />
                    </div>
                </div>
            ))}
        </div>
        <div className="flex w-[12px] flex-col items-center bg-[#f0f0f0] py-[3px]">
            <Chevron dir="up" />
            <div className="mt-[3px] h-[26px] w-[11px] bg-[#cdcdcd]" />
            <div className="flex-1" />
            <Chevron dir="down" />
        </div>
    </div>
);

const CommandLine = () => (
    <div className="flex h-[45px] border-t-2 border-[#5f5f5f] bg-[#c8c8c8] text-[#222]">
        <div className="w-[11px] bg-[#a3a3a3] px-px pt-[2px]"><div className="h-[3px] border-y border-[#777]" /></div>
        <div className="flex flex-1 flex-col">
            <div className="flex h-[31px] flex-col border-b border-[#aaa] pl-[2px] leading-[9px]">
                <div className="h-[10px]"><Mono text="当前 UCS 名称: *世界*" /></div>
                <div className="h-[12px]"><Mono text="指定 UCS 的原点或 [面(F)/命名(NA)/对象(OB)/上一个(P)/视图(V)/世界(W)/X/Y/Z/Z 轴(ZA)] <世界>: _w" /></div>
            </div>
            <div className="flex h-[12px] items-center bg-white pl-[2px] leading-[12px]">
                <Mono text="命令: UCS" />
                <div className="h-[11px] w-px bg-black" />
            </div>
        </div>
    </div>
);

const STATUS = ['infer', 'snap', 'grid', 'ortho', 'polar', 'osnap', 'osnap3d', 'otrack', 'ducs', 'dyn', 'lwt', 'tpy', 'qp', 'sc'];
const STATUS_ON = ['grid', 'polar', 'otrack', 'tpy'];

const StatusBar = () => (
    <div className="flex h-[16px] items-center border-t border-[#666] bg-[linear-gradient(#898989,#7b7b7b)]">
        <div className="flex h-full w-[159px] items-center bg-[linear-gradient(#9a9a9a,#878787)] pt-[2px] pl-[8px] font-['Liberation_Mono'] text-[7.330px] whitespace-pre text-black">
            3090.1643, 666.6450 , 0.0000
        </div>
        {STATUS.map((s) => (
            <div key={s} className={`flex h-[15px] w-[16.100px] items-center justify-center border-r border-[#777] ${STATUS_ON.includes(s) ? 'bg-[#a9d3e2]' : 'bg-[#b4b4b4]'}`}>
                <Icon name={s} size={12} />
            </div>
        ))}
        <div className="flex-1" />
        <div className="flex h-[15px] w-[240px] items-center bg-[#a9a9a9] text-[8.500px] text-[#222]">
            <div className="w-[22px] text-center whitespace-nowrap">模型</div>
            <div className="flex w-[16px] justify-center border-l border-[#777]"><Icon name="layout" size={12} /></div>
            <div className="flex w-[16px] justify-center"><Icon name="qview" size={12} /></div>
            <div className="h-full w-[13px] bg-[#858585]" />
            <div className="flex w-[40px] items-center justify-between px-[2px]"><Icon name="anno" size={11} />1:1<Caret /></div>
            <div className="flex w-[16px] justify-center border-l border-[#777]"><Icon name="annoVis" size={12} /></div>
            <div className="flex w-[17px] justify-center border-l border-[#777]"><Icon name="anno" size={12} /></div>
            <div className="flex w-[19px] justify-center border-l-2 border-[#777]"><Icon name="gear" size={12} /></div>
            <div className="flex w-[16px] justify-center border-l border-[#777]"><Icon name="lock" size={12} /></div>
            <div className="flex w-[16px] justify-center"><Icon name="monitor" size={12} /></div>
            <div className="flex h-[13px] w-[20px] items-center justify-center border border-[#555] bg-[#959595]"><Icon name="bulb" size={12} /></div>
            <div className="flex w-[12px] justify-end"><Caret /></div>
            <div className="flex w-[16px] justify-center"><Icon name="clean" size={12} /></div>
        </div>
    </div>
);

const AppSlot = ({ children, active = false }: { children: React.ReactNode; active?: boolean }) => (
    <div className={`flex h-full w-[35.800px] flex-col items-center ${active ? 'bg-[#3b494e]' : ''}`}>
        <div className="flex flex-1 items-center">{children}</div>
        <div className={`h-[2px] bg-[#76b9c4] ${active ? 'w-full' : 'w-[29px]'}`} />
    </div>
);

const TaskBar = () => (
    <div className="flex h-[29px] items-center bg-[#05171c]">
        <div className="flex w-[36px] justify-center">
            <svg viewBox="0 0 12 12" width="12" height="12" fill="#fff"><path d="M0 1.700 5.500 1v4.700H0zM6.200.9 12 0v5.700H6.200zM0 6.300h5.500V11L0 10.300zM6.200 6.300H12V12l-5.800-.9z" /></svg>
        </div>
        <div className="flex h-full w-[251px] items-center bg-[#f0f0f0] pr-[9px] pl-[6px]">
            <svg viewBox="0 0 16 16" width="16" height="16"><circle cx="8" cy="8" r="6.500" fill="none" stroke="#111" strokeWidth="2" /></svg>
            <span className="ml-[6px] flex-1 text-[10.250px] text-[#444]">在这里输入你要搜索的内容</span>
            <svg viewBox="0 0 12 16" width="11" height="14" fill="none" stroke="#444" strokeWidth="1.200"><rect x="4" y="1" width="4" height="9" rx="2" /><path d="M2 7v2a4 4 0 0 0 8 0V7M6 13v2.500" /></svg>
        </div>
        <div className="ml-[2px] flex h-full">
            <AppSlot active>
                <svg viewBox="0 0 18 18" width="17" height="17">
                    <path d="M5 8h12v9H5z" fill="#aab0b2" />
                    <path d="M5 1h5l5 13-4 1-1-3-5 1-1 3-4-1z" fill="#d3222a" />
                    <path d="m7 5 2 5-3 .5z" fill="#fbdedb" />
                    <path d="M12 14h5v3h-5z" fill="#222" />
                </svg>
            </AppSlot>
            <AppSlot>
                <svg viewBox="0 0 18 18" width="16" height="16"><path d="M1 8c1-5 4-7.500 8.500-7.500 5 0 7.500 3.500 7.500 9H6.500c.3 4 5 5 9.500 2.500v3.600C8 20 1.500 17 2 10.500 2.500 7 5 5 7.500 4.500 4.500 4.800 2.500 6 1 8zm5.500-1H12c0-4-5-4-5.500 0z" fill="#0a7bdc" /></svg>
            </AppSlot>
            <AppSlot>
                <svg viewBox="0 0 20 18" width="18" height="17">
                    <path d="M1 11c0-5 5-7 9-7s7 2 7 6-3 3-4 4-1 3-4 3-8-2-8-6z" fill="#cfe4ef" />
                    <circle cx="5" cy="9" r="1.500" fill="#2d7dd2" /><circle cx="9" cy="6.500" r="1.500" fill="#e24a33" /><circle cx="5.500" cy="13" r="1.500" fill="#42a846" /><circle cx="13" cy="8" r="1.300" fill="#f3c623" />
                    <path d="M9 15 16 3l2-2 1 3-2 2-6 10z" fill="#dd8b3a" />
                </svg>
            </AppSlot>
            <AppSlot>
                <svg viewBox="0 0 18 18" width="18" height="18"><path d="M1 7.500h16V17H1z" fill="#fff" /><path d="m1 3 16-2v3L1 6z" fill="#fff" /><path d="m3.500 2.500 2 3M7.500 2l2 3M11.500 1.500l2 3" stroke="#05171c" strokeWidth="1.500" /></svg>
            </AppSlot>
        </div>
        <div className="flex-1" />
        <svg viewBox="0 0 90 16" width="90" height="16" fill="none" stroke="#eee" strokeWidth="1.200">
            <path d="m1 10 4-4 4 4M20 5.500h8v5h-8z" />
            <path d="M21 6.500h6v3h-6z" fill="#eee" /><path d="M18 4v5M29.500 7v2" />
            <path d="M37 13a9 9 0 0 1 9-9M40 13a6 6 0 0 1 6-6M43 13a3 3 0 0 1 3-3" />
            <path d="M52 6.500h2l3-2.500v8l-3-2.500h-2zM59 6a3 3 0 0 1 0 4M61 4.500a5 5 0 0 1 0 7M63 3a7 7 0 0 1 0 10" />
            <path d="m74 3 10-1v11l-10 1z" fill="#18a52c" stroke="none" />
            <path d="M81.500 5c-2-1-5-.5-4.500 1.500s4.500.5 4 3-3.500 1.500-4.500 1" stroke="#fff" strokeWidth="1.600" />
        </svg>
        <div className="ml-[5px] flex w-[48px] flex-col items-center text-[9.200px] leading-[14px] text-white">
            <span>21:15</span>
            <span>2019/1/2</span>
        </div>
        <div className="ml-[2px] h-full w-[4px] border-l border-[#56656a]" />
    </div>
);

const Arrow = () => (
    <svg viewBox="0 0 1000 562" width="1000" height="562" fill="none" stroke="#850014" strokeLinecap="round" className="pointer-events-none absolute inset-0">
        <path d="M558 223.500 60 499" strokeWidth="4" />
        <path d="M70 483 59.500 502M56 497l71 8" strokeWidth="3.500" />
    </svg>
);

const Watermark = () => (
    <div className="pointer-events-none absolute top-[447px] left-[766px] h-[96px] w-[190px] text-white/75 [text-shadow:0_0_2px_rgba(100,100,100,0.5)]">
        <svg viewBox="0 0 190 96" width="190" height="96" fill="#fff" fillOpacity=".82" stroke="#999" strokeOpacity=".4" className="absolute inset-0">
            <ellipse cx="69" cy="30" rx="6.500" ry="8.500" />
            <ellipse cx="82" cy="18" rx="6.500" ry="8.500" />
            <ellipse cx="97.500" cy="18.500" rx="6.500" ry="8.500" />
            <ellipse cx="107" cy="34" rx="6.500" ry="8.500" />
            <path d="M87 32c8 0 11 8 16 12 10 7 10 21-3 21-5 0-9-1-13-1s-8 1-13 1c-13 0-13-14-3-21 5-4 8-12 16-12z" />
        </svg>
        <span className="absolute top-[30px] left-0 font-['Liberation_Sans'] text-[40px] leading-[40px] font-bold tracking-[-0.5px]">Bai</span>
        <span className="absolute top-[36px] left-[73px] font-['Liberation_Sans'] text-[23px] leading-[24px] font-bold text-[#b7b7b7]">du</span>
        <span className="absolute top-[33px] left-[115px] font-['Noto_Sans_CJK_SC'] text-[31px] leading-[32px] font-bold tracking-[-1px] whitespace-nowrap">经验</span>
        <span className="absolute top-[67px] left-[2px] font-['Open_Sans'] text-[20.900px] leading-[24px] whitespace-nowrap">jingyan.baidu.com</span>
    </div>
);

export default function App() {
    return (
        <div className="relative flex h-[562px] w-[1000px] flex-col overflow-hidden bg-[#696969] font-['Open_Sans','Noto_Sans_CJK_SC',sans-serif]">
            <div className="flex h-[33px] shrink-0">
                <AppButton />
                <div className="flex flex-1 flex-col">
                    <QuickBar />
                    <MenuBar />
                </div>
            </div>
            <ToolbarRows />
            <Workspace />
            <CommandLine />
            <StatusBar />
            <TaskBar />
            <Suggestions />
            <Arrow />
            <Watermark />
        </div>
    );
}
